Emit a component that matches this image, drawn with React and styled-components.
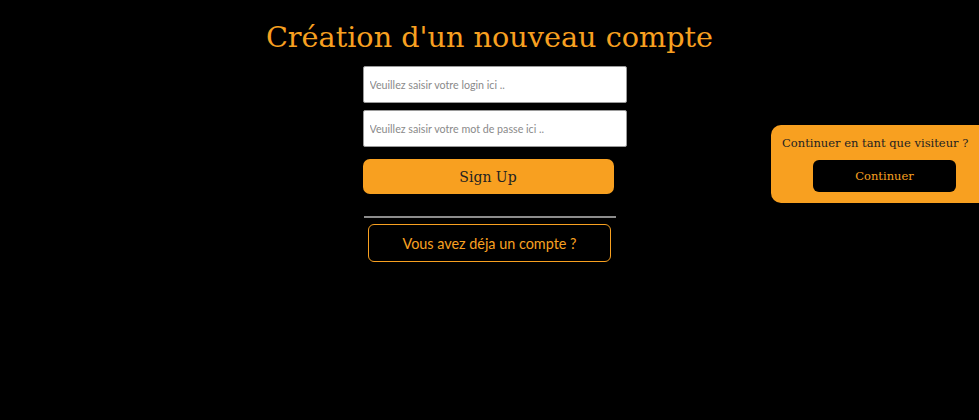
import React from 'react';
import styled, { createGlobalStyle } from 'styled-components';

const GlobalStyle = createGlobalStyle`
  html, body {
    margin: 0;
    padding: 0;
    background: #000;
    overflow: hidden;
  }
`;

const ORANGE = '#f8a020';

const Page = styled.div`
  display: grid;
  grid-template-columns: 1fr 274px 1fr;
  min-height: 420px;
  background: #000;
`;

const Center = styled.main`
  grid-column: 2;
  display: flex;
  flex-direction: column;
  align-items: flex-start;
  padding-left: 10px;
`;

const Title = styled.h1`
  align-self: center;
  margin: 19px 0 11px -10px;
  white-space: nowrap;
  font-family: "DejaVu Serif", serif;
  font-weight: normal;
  font-size: 28.7px;
  line-height: 36px;
  color: ${ORANGE};
`;

const Input = styled.input`
  box-sizing: border-box;
  width: 264px;
  height: 37px;
  margin-bottom: ${(p) => p.$gap}px;
  padding: 0 6px;
  border: 1px solid #9a9a9a;
  border-radius: 2px;
  background: #fff;
  font-family: Lato, sans-serif;
  font-size: 10.7px;
  outline: none;

  &::placeholder {
    color: #8a8a8a;
  }
`;

const SignUp = styled.button`
  width: 251px;
  height: 35px;
  border: none;
  border-radius: 7px;
  background: ${ORANGE};
  color: #222;
  font-family: "DejaVu Serif", serif;
  font-size: 14px;
  cursor: pointer;
`;

const Divider = styled.hr`
  width: 252px;
  margin: 22px 0 6px 1px;
  border: none;
  border-top: 2px solid #8c8c8c;
`;

const LoginLink = styled.button`
  align-self: center;
  margin-left: -10px;
  box-sizing: border-box;
  width: 243px;
  height: 38px;
  border: 1px solid ${ORANGE};
  border-radius: 6px;
  background: #000;
  color: ${ORANGE};
  font-family: Lato, sans-serif;
  font-size: 14.4px;
  cursor: pointer;
`;

const Side = styled.aside`
  grid-column: 3;
  justify-self: end;
  align-self: start;
  margin-top: 125px;
  box-sizing: border-box;
  width: 208px;
  height: 78px;
  padding: 10px 0 0 11px;
  border-radius: 10px 0 0 10px;
  background: ${ORANGE};
  display: flex;
  flex-direction: column;
`;

const SideText = styled.p`
  margin: 0;
  white-space: nowrap;
  font-family: "DejaVu Serif", serif;
  font-size: 11.5px;
  line-height: 16px;
  color: #222;
`;

const GuestButton = styled.button`
  margin: 9px 0 0 31px;
  width: 143px;
  height: 32px;
  border: none;
  border-radius: 6px;
  background: #000;
  color: ${ORANGE};
  font-family: "DejaVu Serif", serif;
  font-size: 11.5px;
  cursor: pointer;
`;

export default function App() {
  return (
    <>
      <GlobalStyle />
      <Page>
        <Center>
          <Title>Création d'un nouveau compte</Title>
          <Input $gap={7} type="text" placeholder="Veuillez saisir votre login ici .." />
          <Input $gap={12} type="password" placeholder="Veuillez saisir votre mot de passe ici .." />
          <SignUp>Sign Up</SignUp>
          <Divider />
          <LoginLink>Vous avez déja un compte ?</LoginLink>
        </Center>
        <Side>
          <SideText>Continuer en tant que visiteur ?</SideText>
          <GuestButton>Continuer</GuestButton>
        </Side>
      </Page>
    </>
  );
}
